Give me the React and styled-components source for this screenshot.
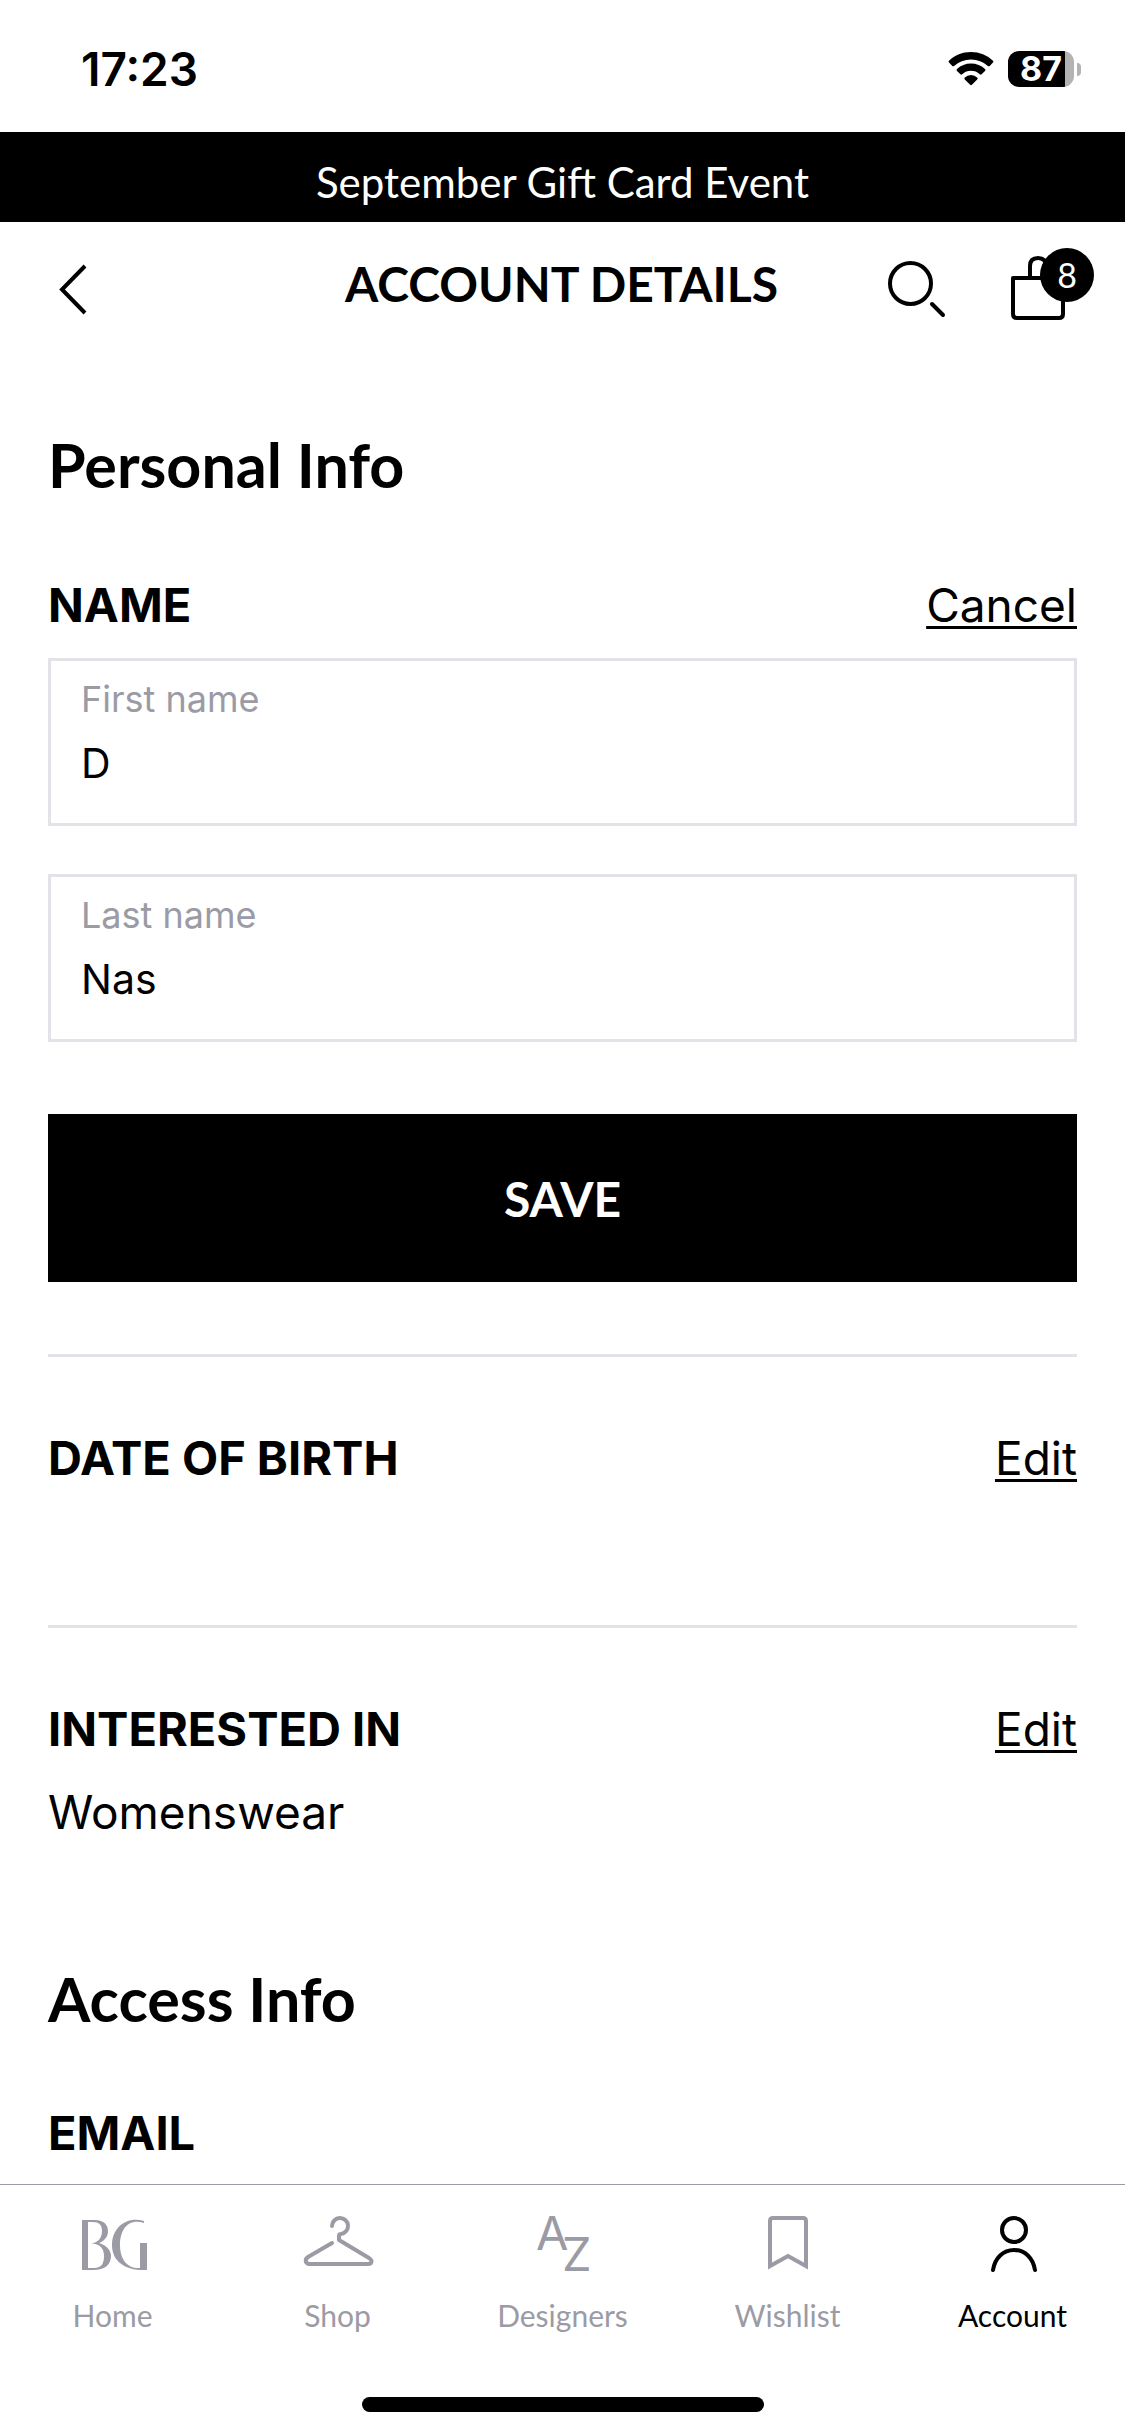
import { useState } from "react";
import styled, { createGlobalStyle } from "styled-components";

const App = () => {
  const [firstName, setFirstName] = useState("D");
  const [lastName, setLastName] = useState("Nas");

  return (
    <Page>
      <GlobalStyle />
      <StatusBar>
        <time>17:23</time>
        <StatusIcons>
          <WifiIcon />
          <Battery>
            <BatteryLevel>87</BatteryLevel>
            <BatteryTip />
          </Battery>
        </StatusIcons>
      </StatusBar>
      <Banner>September Gift Card Event</Banner>
      <Header>
        <IconButton aria-label="Back">
          <BackIcon />
        </IconButton>
        <h1>ACCOUNT DETAILS</h1>
        <HeaderActions>
          <IconButton aria-label="Search">
            <SearchIcon />
          </IconButton>
          <IconButton aria-label="Shopping bag">
            <BagIcon />
            <BagCount>8</BagCount>
          </IconButton>
        </HeaderActions>
      </Header>

      <Content>
        <SectionTitle>Personal Info</SectionTitle>
        <EditingBlock>
          <BlockHeader>
            <h3>NAME</h3>
            <a href="#cancel">Cancel</a>
          </BlockHeader>
          <Form onSubmit={(e) => e.preventDefault()}>
            <Field>
              <label htmlFor="first-name">First name</label>
              <input
                id="first-name"
                value={firstName}
                onChange={(e) => setFirstName(e.target.value)}
              />
            </Field>
            <Field>
              <label htmlFor="last-name">Last name</label>
              <input
                id="last-name"
                value={lastName}
                onChange={(e) => setLastName(e.target.value)}
              />
            </Field>
            <SaveButton type="submit">SAVE</SaveButton>
          </Form>
        </EditingBlock>
        <DividedBlock>
          <BlockHeader>
            <h3>DATE OF BIRTH</h3>
            <a href="#date-of-birth">Edit</a>
          </BlockHeader>
        </DividedBlock>
        <DividedBlock>
          <BlockHeader>
            <h3>INTERESTED IN</h3>
            <a href="#interested-in">Edit</a>
          </BlockHeader>
          <p>Womenswear</p>
        </DividedBlock>
        <SectionTitle>Access Info</SectionTitle>
        <Block>
          <BlockHeader>
            <h3>EMAIL</h3>
          </BlockHeader>
        </Block>
      </Content>

      <BottomBar>
        <TabList>
          <Tab href="#home">
            <LogoIcon />
            Home
          </Tab>
          <Tab href="#shop">
            <HangerIcon />
            Shop
          </Tab>
          <Tab href="#designers">
            <DesignersIcon />
            Designers
          </Tab>
          <Tab href="#wishlist">
            <WishlistIcon />
            Wishlist
          </Tab>
          <Tab href="#account" $active>
            <AccountIcon />
            Account
          </Tab>
        </TabList>
        <HomeIndicator />
      </BottomBar>
    </Page>
  );
};

const WifiIcon = () => (
  <svg width="46" height="36" viewBox="0 0 46 36" fill="currentColor">
    <path d="M23 1C14.500 1 6.800 4.300 1 9.700a1.300 1.300 0 0 0 0 1.900l3.300 3.300a1.300 1.300 0 0 0 1.800 0A25 25 0 0 1 23 8.400a25 25 0 0 1 16.900 6.500 1.300 1.300 0 0 0 1.800 0l3.300-3.300a1.300 1.300 0 0 0 0-1.900A32 32 0 0 0 23 1z" />
    <path d="M23 12.500a20.500 20.500 0 0 0-14 5.500 1.300 1.300 0 0 0 0 1.900l3.400 3.300a1.300 1.300 0 0 0 1.800 0 13 13 0 0 1 17.600 0 1.300 1.300 0 0 0 1.800 0l3.400-3.300a1.300 1.300 0 0 0 0-1.900 20.500 20.500 0 0 0-14-5.500z" />
    <path d="M23 24a9 9 0 0 0-6.200 2.500 1.300 1.300 0 0 0 0 1.900l5.300 5.300a1.300 1.300 0 0 0 1.800 0l5.300-5.300a1.300 1.300 0 0 0 0-1.900A9 9 0 0 0 23 24z" />
  </svg>
);

const BackIcon = () => (
  <svg width="28" height="52" viewBox="0 0 28 52" fill="none" stroke="currentColor" strokeWidth="4">
    <path d="M27 2 4 25.500 27 49" />
  </svg>
);

const SearchIcon = () => (
  <svg width="60" height="60" viewBox="0 0 60 60" fill="none" stroke="currentColor" strokeWidth="4">
    <circle cx="23.5" cy="23.5" r="20.5" />
    <path d="m45 44 11 11" strokeLinecap="round" />
  </svg>
);

const BagIcon = () => (
  <svg width="54" height="70" viewBox="0 0 54 70" fill="none" stroke="currentColor" strokeWidth="4">
    <path d="M2 23h50v36q0 4-4 4H6q-4 0-4-4z" strokeLinejoin="round" />
    <path d="M19 23V11q0-8 8-8t8 8v12" />
  </svg>
);

const LogoIcon = () => (
  <svg width="80" height="60" viewBox="0 0 80 60" fill="currentColor">
    <path
      fillRule="evenodd"
      d="M9 5H22C31 5 35 10 35 16C35 22 31 26 26 28C33 30 38 35 38 41C38 50 31 55 21 55H9ZM15 7V53H21C29 53 31 48 31 41C31 33 27 29 18 28.500C26 27.500 29 22 29 16C29 10 26 7 20 7Z"
    />
    <path d="M71 6C53 1 39 13 39 30C39 47 53 56 74 55V28H67V53C55 54 47 45 47 30C47 15 55 3 71 8Z" />
  </svg>
);

const HangerIcon = () => (
  <svg width="80" height="60" viewBox="0 0 80 60" fill="none" stroke="currentColor" strokeWidth="4" strokeLinecap="round" strokeLinejoin="round">
    <path d="M34 11a8 8 0 1 1 9 8q-2 0-2 2v4l30 18q4 3 2 5-1 1-3 1H12q-3 0-4-2-1-3 2-5l24-14" />
  </svg>
);

const DesignersIcon = () => (
  <svg width="80" height="60" viewBox="0 0 80 60" fill="currentColor" fontFamily="Inter, sans-serif" fontSize="47">
    <text x="13" y="35">A</text>
    <text x="39" y="56">Z</text>
  </svg>
);

const WishlistIcon = () => (
  <svg width="80" height="60" viewBox="0 0 80 60" fill="none" stroke="currentColor" strokeWidth="4">
    <path d="M22 51V6q0-3 3-3h30q3 0 3 3v45L40 41z" />
  </svg>
);

const AccountIcon = () => (
  <svg width="80" height="60" viewBox="0 0 80 60" fill="none" stroke="currentColor" strokeWidth="4" strokeLinecap="round">
    <circle cx="41" cy="15" r="12" />
    <path d="M20 55c2-12 10-20 21-20s19 8 21 20" />
  </svg>
);

const GlobalStyle = createGlobalStyle`
  * {
    box-sizing: border-box;
  }

  body {
    margin: 0;
    background-color: #fff;
    color: #000;
    font-family: Inter, "Liberation Sans", sans-serif;
  }

  h1, h2, h3, p {
    margin: 0;
  }

  button {
    padding: 0;
    border: none;
    background: none;
    color: inherit;
  }

  svg {
    display: block;
    overflow: visible;
  }
`;

const Page = styled.div`
  display: flex;
  flex-direction: column;
  height: 100vh;
`;

const StatusBar = styled.div`
  display: flex;
  flex: none;
  align-items: center;
  justify-content: space-between;
  height: 132px;
  padding: 6px 44px 0 81px;
  font-size: 46px;
  font-weight: 600;
`;

const StatusIcons = styled.div`
  display: flex;
  align-items: center;
  gap: 14px;
`;

const Battery = styled.div`
  display: flex;
  align-items: center;
  gap: 3px;
`;

const BatteryLevel = styled.div`
  width: 66px;
  height: 36px;
  border-radius: 11px;
  background: linear-gradient(to right, #000 86%, #b3b3b3 86%);
  color: #fff;
  font-size: 34px;
  font-weight: 700;
  line-height: 36px;
  text-align: center;
`;

const BatteryTip = styled.div`
  width: 4px;
  height: 13px;
  border-radius: 0 4px 4px 0;
  background-color: #b3b3b3;
`;

const Banner = styled.div`
  flex: none;
  height: 90px;
  padding-top: 10px;
  background-color: #000;
  color: #fff;
  font-family: Lato, sans-serif;
  font-size: 42px;
  line-height: 80px;
  text-align: center;
`;

const Header = styled.header`
  display: grid;
  flex: none;
  grid-template-columns: 1fr auto 1fr;
  align-items: center;
  height: 136px;
  padding: 0 60px 0 58px;

  h1 {
    padding-bottom: 14px;
    font-family: Lato, sans-serif;
    font-size: 48px;
    font-weight: 700;
  }
`;

const HeaderActions = styled.div`
  display: flex;
  align-items: center;
  justify-content: flex-end;
  gap: 64px;
`;

const IconButton = styled.button`
  position: relative;
  justify-self: start;
`;

const BagCount = styled.span`
  position: absolute;
  top: -7px;
  left: 29px;
  width: 54px;
  height: 54px;
  border-radius: 50%;
  background-color: #000;
  color: #fff;
  font-family: Lato, sans-serif;
  font-size: 34px;
  line-height: 54px;
  text-align: center;
`;

const Content = styled.main`
  flex: 1;
  min-height: 0;
  padding: 66px 48px 0;
  overflow-y: auto;
  scrollbar-width: none;
`;

const SectionTitle = styled.h2`
  font-family: Lato, sans-serif;
  font-size: 61px;
  font-weight: 700;
  line-height: 82px;
`;

const Block = styled.section`
  padding: 64px 0 72px;

  p {
    padding-top: 26px;
    font-size: 46px;
    line-height: 56px;
  }
`;

const EditingBlock = styled(Block)`
  padding-top: 70px;
`;

const DividedBlock = styled(Block)`
  min-height: 271px;
  padding: 72px 0 118px;
  border-top: 3px solid #e2e2e8;
`;

const BlockHeader = styled.div`
  display: flex;
  justify-content: space-between;
  font-size: 46px;
  line-height: 58px;

  h3 {
    font-size: 47px;
    font-weight: 700;
  }

  a {
    color: inherit;
    text-decoration-thickness: 3px;
    text-underline-offset: 4px;
    text-decoration-skip-ink: none;
  }
`;

const Form = styled.form`
  display: flex;
  flex-direction: column;
  gap: 48px;
  padding-top: 24px;
`;

const Field = styled.div`
  display: flex;
  flex-direction: column;
  height: 168px;
  padding: 16px 30px;
  border: 3px solid #e2e2e8;

  label {
    color: #9b9ba5;
    font-size: 36px;
    line-height: 44px;
  }

  input {
    height: 84px;
    padding: 0;
    border: none;
    outline: none;
    background: none;
    color: #000;
    font-family: inherit;
    font-size: 41px;
  }
`;

const SaveButton = styled.button`
  height: 168px;
  margin-top: 24px;
  background-color: #000;
  color: #fff;
  font-family: Lato, sans-serif;
  font-size: 48px;
  font-weight: 700;
`;

const BottomBar = styled.footer`
  display: flex;
  flex: none;
  flex-direction: column;
  align-items: center;
  justify-content: space-between;
  height: 252px;
  padding: 30px 0 24px;
  border-top: 1px solid #9b9ba5;
`;

const TabList = styled.nav`
  display: grid;
  grid-template-columns: repeat(5, 1fr);
  width: 100%;
`;

const Tab = styled.a`
  display: flex;
  flex-direction: column;
  align-items: center;
  gap: 20px;
  color: ${({ $active }) => ($active ? "#000" : "#9b9ba5")};
  font-family: Lato, sans-serif;
  font-size: 30px;
  line-height: 40px;
  text-decoration: none;
`;

const HomeIndicator = styled.div`
  width: 402px;
  height: 15px;
  border-radius: 8px;
  background-color: #000;
`;

export default App;
